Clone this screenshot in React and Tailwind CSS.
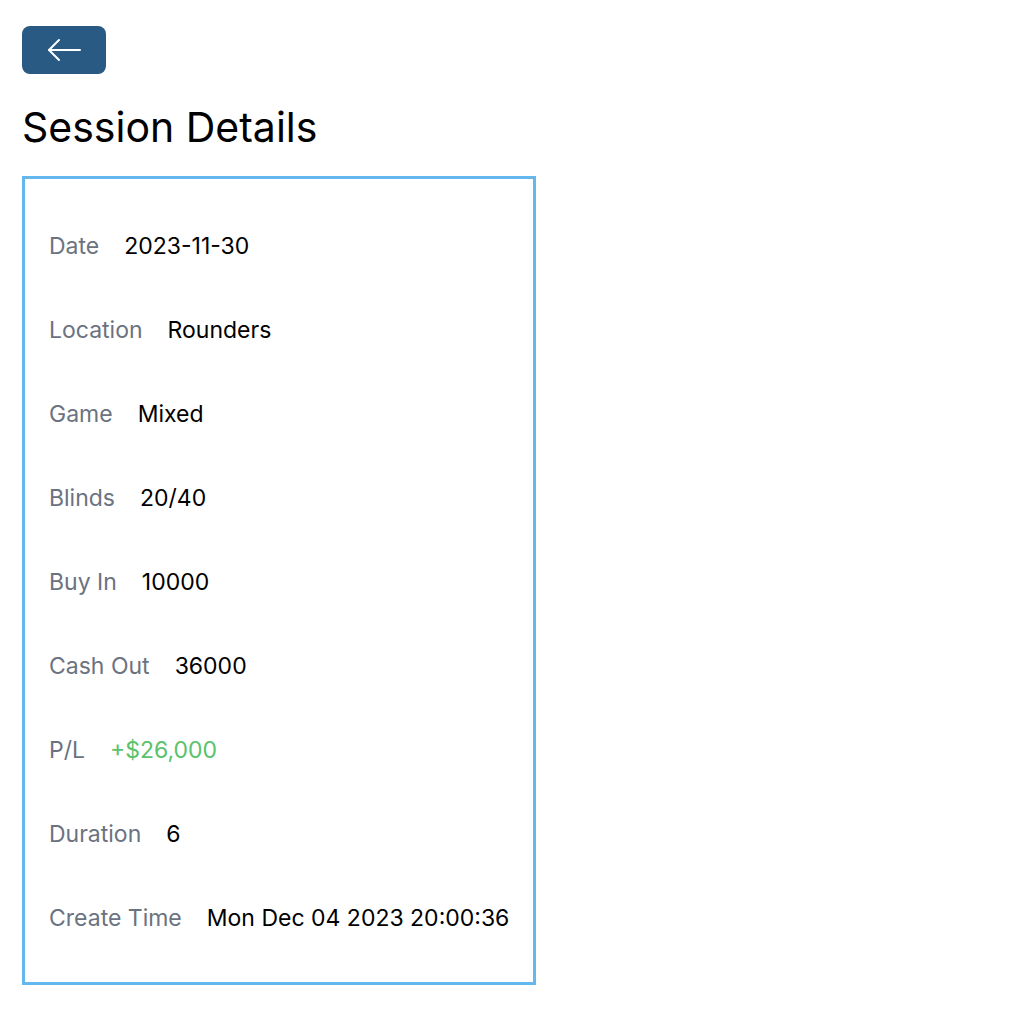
import React from "react";

const rows = [
  ["Date", "2023-11-30"],
  ["Location", "Rounders"],
  ["Game", "Mixed"],
  ["Blinds", "20/40"],
  ["Buy In", "10000"],
  ["Cash Out", "36000"],
  ["P/L", "+$26,000", true],
  ["Duration", "6"],
  ["Create Time", "Mon Dec 04 2023 20:00:36"],
];

export default function App() {
  return (
    <div className="bg-white min-h-[1026px] pl-[22px] pt-[26px]" style={{ fontFamily: "Inter, 'Noto Sans', sans-serif" }}>
      <button className="w-[84px] h-[48px] rounded-lg bg-[#285a84] flex items-center justify-center">
        <svg width="34" height="24" viewBox="0 0 34 24" fill="none" stroke="white" strokeWidth="2" strokeLinecap="round" strokeLinejoin="round">
          <path d="M33 12H2" />
          <path d="M12 2L2 12l10 10" />
        </svg>
      </button>
      <h1 className="text-[41px] leading-[48px] mt-[29px] text-black font-normal">Session Details</h1>
      <div className="mt-[25px] w-[514px] border-[3px] border-[#63b8ee] pl-[24px] pr-[10px] pt-[25px] pb-[22px]">
        {rows.map(([k, v, g]) => (
          <div key={k} className="flex items-center h-[84px] text-[23px] gap-[25px] whitespace-nowrap">
            <span className="text-[#6b7280]">{k}</span>
            <span className={g ? "text-[#59c26a]" : "text-black"}>{v}</span>
          </div>
        ))}
      </div>
    </div>
  );
}
